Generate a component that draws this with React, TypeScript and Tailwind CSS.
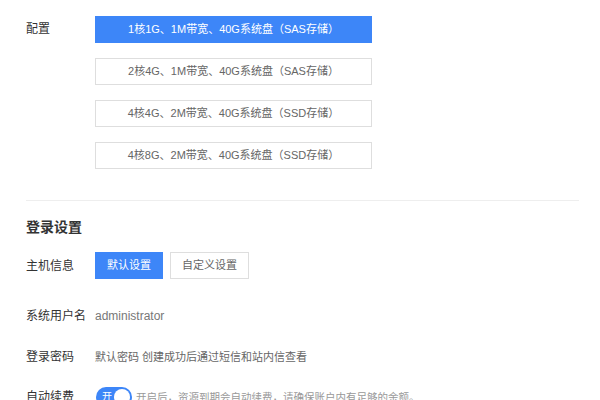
import { useState } from "react";

const specs = [
  "1核1G、1M带宽、40G系统盘（SAS存储）",
  "2核4G、1M带宽、40G系统盘（SAS存储）",
  "4核4G、2M带宽、40G系统盘（SSD存储）",
  "4核8G、2M带宽、40G系统盘（SSD存储）",
];

const font = { fontFamily: '"Liberation Sans", "Noto Sans CJK SC", sans-serif' };

export default function App() {
  const [spec, setSpec] = useState(0);
  const [mode, setMode] = useState<"default" | "custom">("default");
  const [renew, setRenew] = useState(true);

  return (
    <div
      style={font}
      className="w-[600px] h-[400px] overflow-hidden bg-white pl-[26px] pr-[21px] pt-4 text-[12px] text-[#333]"
    >
      {/* 配置 */}
      <div className="flex">
        <div className="w-[69px] shrink-0 leading-[27px]">配置</div>
        <div className="flex flex-col gap-[15px]">
          {specs.map((s, i) => (
            <button
              key={s}
              onClick={() => setSpec(i)}
              className={
                i === spec
                  ? "w-[277px] h-[27px] text-[11px] bg-[#3d86f8] border border-[#3d86f8] text-white"
                  : "w-[277px] h-[27px] text-[11px] bg-white border border-[#dedede] text-[#666]"
              }
            >
              {s}
            </button>
          ))}
        </div>
      </div>

      <div className="mt-[31px] border-t border-[#eeeeee]" />

      <h2 className="mt-4 text-[14px] leading-5 font-bold text-[#333]">登录设置</h2>

      <div className="mt-[15px] flex items-center">
        <div className="w-[69px] shrink-0">主机信息</div>
        <div className="flex gap-[7px]">
          <button
            onClick={() => setMode("default")}
            className={
              mode === "default"
                ? "w-[68px] h-[27px] text-[11px] bg-[#3d86f8] border border-[#3d86f8] text-white"
                : "w-[68px] h-[27px] text-[11px] bg-white border border-[#dedede] text-[#666]"
            }
          >
            默认设置
          </button>
          <button
            onClick={() => setMode("custom")}
            className={
              mode === "custom"
                ? "w-[79px] h-[27px] text-[11px] bg-[#3d86f8] border border-[#3d86f8] text-white"
                : "w-[79px] h-[27px] text-[11px] bg-white border border-[#dedede] text-[#666]"
            }
          >
            自定义设置
          </button>
        </div>
      </div>

      <div className="mt-[27px] flex items-center leading-5">
        <div className="w-[69px] shrink-0">系统用户名</div>
        <div className="text-[12px] text-[#777]">administrator</div>
      </div>

      <div className="mt-[21px] flex items-center leading-5">
        <div className="w-[69px] shrink-0">登录密码</div>
        <div className="text-[11px] text-[#666]">默认密码 创建成功后通过短信和站内信查看</div>
      </div>

      <div className="mt-5 flex items-center leading-5">
        <div className="w-[69px] shrink-0">自动续费</div>
        <button
          onClick={() => setRenew(!renew)}
          className={
            renew
              ? "ml-px w-9 h-5 rounded-full bg-[#3d86f8] flex items-center justify-between pl-[6px] pr-[2px]"
              : "ml-px w-9 h-5 rounded-full bg-[#ccc] flex items-center pl-[2px]"
          }
        >
          {renew && <span className="text-[10px] leading-none text-white">开</span>}
          <span className="w-4 h-4 rounded-full bg-white" />
        </button>
        <div className="ml-[4px] text-[10.5px] text-[#999]">
          开启后，资源到期会自动续费，请确保账户内有足够的余额。
        </div>
      </div>
    </div>
  );
}
